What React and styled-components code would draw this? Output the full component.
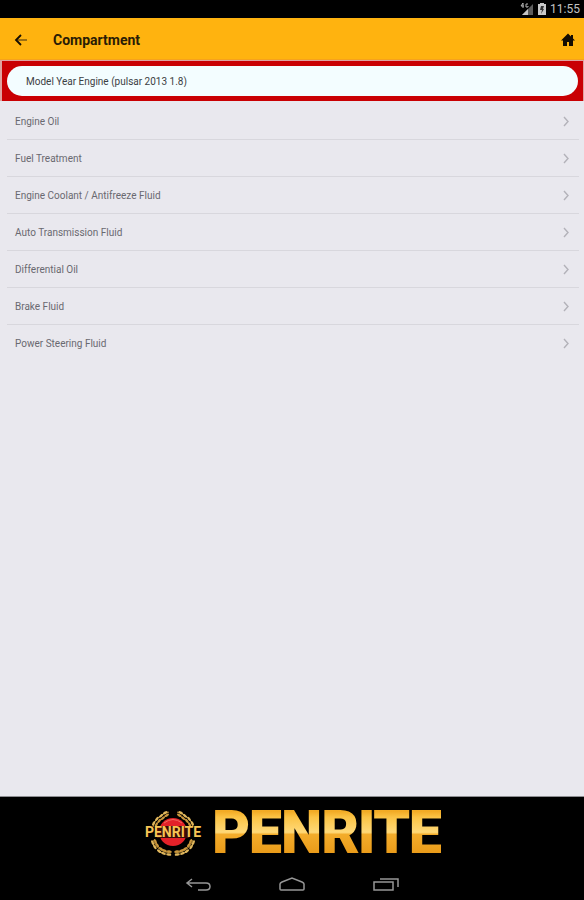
import { useState } from "react";
import styled, { createGlobalStyle } from "styled-components";

const GlobalStyle = createGlobalStyle`
  * {
    box-sizing: border-box;
  }

  body {
    margin: 0;
    background: #000;
    font-family: Roboto, "Liberation Sans", sans-serif;
  }
`;

const Screen = styled.div`
  display: flex;
  flex-direction: column;
  min-height: 100vh;
  background: #e9e8ee;
`;

const StatusBar = styled.div`
  display: flex;
  align-items: center;
  justify-content: flex-end;
  gap: 4px;
  height: 18px;
  padding-right: 4px;
  background: #000;
  color: #c4c4c4;
  font-size: 12px;
  line-height: 18px;
`;

const Toolbar = styled.header`
  display: flex;
  align-items: center;
  height: 42px;
  padding: 2px 8px 0 12px;
  background: #ffb30f;
  border-bottom: 1px solid #f6a21c;
`;

const Title = styled.h1`
  flex: 1;
  margin: 0 0 0 23px;
  color: #2a1c05;
  font-size: 14px;
  font-weight: 700;
  line-height: 20px;
`;

const IconButton = styled.button`
  display: flex;
  align-items: center;
  justify-content: center;
  padding: 0;
  border: 0;
  background: none;
  color: ${({ $color }) => $color || "#150d02"};
  cursor: pointer;
`;

const SearchBar = styled.div`
  padding: 5px;
  background: #c90003;
  border: solid #dfa3a0;
  border-width: 1px 1px 0 2px;
`;

const SearchInput = styled.input`
  display: block;
  width: 100%;
  height: 30px;
  padding: 0 19px;
  border: 0;
  border-radius: 15px;
  outline: none;
  background: #f3fdff;
  color: #3c4043;
  font-family: inherit;
  font-size: 10px;
`;

const List = styled.ul`
  flex: 1;
  margin: 0;
  padding: 2px 5px 0 7px;
  list-style: none;
`;

const Item = styled.li`
  & + & {
    border-top: 1px solid #d8d7dd;
  }
`;

const ItemLink = styled.a`
  display: flex;
  align-items: center;
  justify-content: space-between;
  height: 36px;
  padding: 1px 8px 0 8px;
  color: #696970;
  font-size: 10px;
  line-height: 14px;
  text-decoration: none;
`;

const Footer = styled.footer`
  background: #000;
  border-top: 1px solid #8e8e92;
`;

const Brand = styled.div`
  display: flex;
  align-items: center;
  justify-content: center;
  gap: 10px;
  height: 72px;
`;

const Wordmark = styled.span`
  background: linear-gradient(
    #f2ab25 20%,
    #fbc345 28%,
    #ffd978 49%,
    #f3ac2b 52%,
    #e99a18 80%
  );
  background-clip: text;
  color: transparent;
  -webkit-text-stroke: 2px transparent;
  font-size: 57px;
  font-weight: 700;
  line-height: 72px;
`;

const NavBar = styled.nav`
  display: flex;
  justify-content: center;
  gap: 66px;
  height: 31px;
`;

const compartments = [
  "Engine Oil",
  "Fuel Treatment",
  "Engine Coolant / Antifreeze Fluid",
  "Auto Transmission Fluid",
  "Differential Oil",
  "Brake Fluid",
  "Power Steering Fluid",
];

const SignalIcon = () => (
  <svg width="14" height="14" viewBox="0 0 14 14" aria-hidden="true">
    <path d="M13 2v11H2z" fill="#5c5c5c" />
    <path d="M8 7v6H2z" fill="#c4c4c4" />
    <path d="M3 1 1 4h3M3 1v5M8 2H6v3h2V4" stroke="#b4b4b4" fill="none" />
  </svg>
);

const BatteryIcon = () => (
  <svg width="8" height="13" viewBox="0 0 8 13" aria-hidden="true">
    <path d="M2 0h4v1h2v11H0V1h2z" fill="#c8c8c8" />
    <path d="M3 3h3L5 6h1l-3 5 1-4H2z" fill="#333" />
  </svg>
);

const BackIcon = () => (
  <svg width="18" height="18" viewBox="0 0 18 18" fill="none" aria-hidden="true">
    <path d="M5 9h10" stroke="#7d5912" strokeWidth="1.5" />
    <path d="M9 4 4 9l5 5" stroke="currentColor" strokeWidth="1.8" />
  </svg>
);

const HomeIcon = () => (
  <svg width="16" height="16" viewBox="0 0 16 16" aria-hidden="true">
    <path
      d="M8 1.5 1 8.5h2V14h4v-4h2v4h4V8.500h2l-2-2V3h-2v1.500z"
      fill="currentColor"
    />
  </svg>
);

const ChevronIcon = () => (
  <svg width="10" height="12" viewBox="0 0 10 12" fill="none" aria-hidden="true">
    <path d="m3 1 4 4.500-4 4.500" stroke="#b3b2b9" strokeWidth="1.4" />
  </svg>
);

// Leaves along each arm of the laurel, as [x, y, angle] on the right hand side
const leaves = [
  [37, 4, 28],
  [41, 7, 40],
  [45, 10, 50],
  [48, 14, 62],
  [49, 32, 115],
  [47, 36, 128],
  [43, 40, 145],
  [39, 42, 158],
  [34, 43, 170],
];

const LaurelArm = () => (
  <g>
    <path
      d="M34 2Q48 6 50 17M50 30Q46 42 32 43"
      stroke="#b98c35"
      strokeWidth="1"
      fill="none"
    />
    {leaves.map(([x, y, angle]) => (
      <g key={angle} transform={`translate(${x} ${y}) rotate(${angle})`}>
        <ellipse cy="-1.5" rx="2.6" ry="1.2" fill="#dfb65c" />
        <ellipse cy="1.5" rx="2.6" ry="1.2" fill="#c9963c" />
      </g>
    ))}
  </g>
);

const Emblem = () => (
  <svg width="60" height="46" viewBox="0 0 60 46" aria-hidden="true">
    <LaurelArm />
    <g transform="matrix(-1 0 0 1 60 0)">
      <LaurelArm />
    </g>
    <circle cx="30" cy="22" r="14" fill="#e32129" />
    <path d="M21 13q9-7 18 0" stroke="#ef6a5e" fill="none" />
    <path d="M14 16h32v12H14z" fill="#3a0c08" />
    <text
      x="30"
      y="27"
      textAnchor="middle"
      fill="#f7c455"
      fontSize="14"
      fontWeight="700"
    >
      PENRITE
    </text>
  </svg>
);

const App = () => {
  const [vehicle, setVehicle] = useState("Model Year Engine (pulsar 2013 1.8)");

  return (
    <Screen>
      <GlobalStyle />
      <StatusBar>
        <SignalIcon />
        <BatteryIcon />
        <span>11:55</span>
      </StatusBar>
      <Toolbar>
        <IconButton aria-label="Back">
          <BackIcon />
        </IconButton>
        <Title>Compartment</Title>
        <IconButton aria-label="Home">
          <HomeIcon />
        </IconButton>
      </Toolbar>
      <SearchBar>
        <SearchInput
          type="text"
          aria-label="Vehicle"
          value={vehicle}
          onChange={(e) => setVehicle(e.target.value)}
        />
      </SearchBar>
      <List>
        {compartments.map((name) => (
          <Item key={name}>
            <ItemLink href="#">
              {name}
              <ChevronIcon />
            </ItemLink>
          </Item>
        ))}
      </List>
      <Footer>
        <Brand>
          <Emblem />
          <Wordmark>PENRITE</Wordmark>
        </Brand>
        <NavBar>
          <IconButton $color="#969696" aria-label="System back">
            <svg width="28" height="18" viewBox="0 0 28 18" fill="none">
              <path
                d="M8 3 3 7l5 4M3 7h19q4 0 4 3.500t-4 3.500h-8"
                stroke="currentColor"
                strokeWidth="1.5"
              />
            </svg>
          </IconButton>
          <IconButton $color="#969696" aria-label="System home">
            <svg width="28" height="18" viewBox="0 0 28 18" fill="none">
              <path
                d="M2 8q0-1 2-2l10-4 10 4q2 1 2 2v5q0 1-1 1H3q-1 0-1-1z"
                stroke="currentColor"
                strokeWidth="1.5"
              />
            </svg>
          </IconButton>
          <IconButton $color="#969696" aria-label="Recent apps">
            <svg width="28" height="18" viewBox="0 0 28 18" fill="none">
              <path
                d="M2 6h19v8H2zM8 3h18v8"
                stroke="currentColor"
                strokeWidth="1.5"
              />
            </svg>
          </IconButton>
        </NavBar>
      </Footer>
    </Screen>
  );
};

export default App;
